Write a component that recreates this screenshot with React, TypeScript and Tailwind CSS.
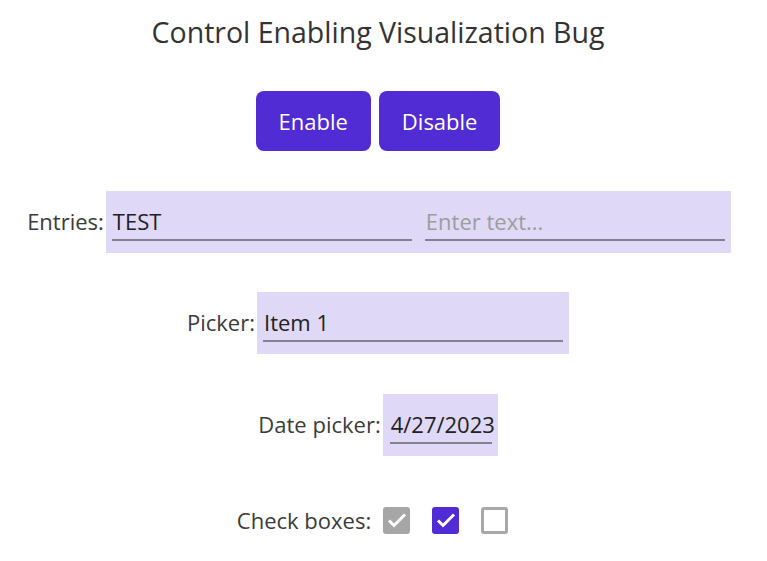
import type { ReactNode } from "react";

const font = { fontFamily: '"Open Sans", "Liberation Sans", sans-serif' };

function Field({ children, width, muted }: { children: ReactNode; width: string; muted?: boolean }) {
  return (
    <div className={`flex flex-col ${width}`}>
      <div
        className={`h-[30px] pl-px text-[22px] leading-[30px] whitespace-nowrap ${
          muted ? "text-[#9c9c9c]" : "text-[#212121]"
        }`}
      >
        {children}
      </div>
      <div className="mt-[3px] h-[2px] bg-[#86818f]" />
    </div>
  );
}

function Row({ label, children, boxClass }: { label: string; children: ReactNode; boxClass: string }) {
  return (
    <div className="flex items-start">
      <span className="mt-[15px] mr-[2px] text-[22px] leading-[30px] text-[#3b3b3b]">{label}</span>
      <div className={`flex h-[62px] items-start bg-[#dfd8f7] pt-[15px] ${boxClass}`}>{children}</div>
    </div>
  );
}

function Check({ state }: { state: "disabled" | "checked" | "empty" }) {
  if (state === "empty") {
    return <div className="h-[27px] w-[27px] rounded-[3px] border-[3px] border-[#a8a8a8] bg-white" />;
  }
  return (
    <div
      className={`grid h-[27px] w-[27px] place-items-center rounded-[3px] ${
        state === "checked" ? "bg-[#512bd4]" : "bg-[#a6a6a6]"
      }`}
    >
      <svg viewBox="0 0 24 24" className="h-[24px] w-[24px]" fill="none" stroke="white" strokeWidth="3">
        <path d="M4 12.5l5 5L20 6.5" />
      </svg>
    </div>
  );
}

export default function App() {
  return (
    <div className="min-h-screen bg-white" style={font}>
      <div className="flex w-[756px] flex-col items-center pt-[13px]">
        <h1 className="text-[28.5px] leading-[38px] font-normal text-[#333333]">
          Control Enabling Visualization Bug
        </h1>

        <div className="mt-[40px] flex gap-[8px]">
          <button className="h-[60px] rounded-[8px] bg-[#512bd4] px-[23px] text-[22px] text-white">Enable</button>
          <button className="h-[60px] rounded-[8px] bg-[#512bd4] px-[23px] text-[22px] text-white">Disable</button>
        </div>

        <div className="mt-[40px] pl-[2px]">
          <Row label="Entries:" boxClass="w-[625px] pl-[6px] gap-[13px]">
            <Field width="w-[300px]">TEST</Field>
            <Field width="w-[300px]" muted>
              Enter text...
            </Field>
          </Row>
        </div>

        <div className="mt-[39px]">
          <Row label="Picker:" boxClass="w-[312px] pl-[6px]">
            <Field width="w-[300px]">Item 1</Field>
          </Row>
        </div>

        <div className="mt-[40px]">
          <Row label="Date picker:" boxClass="w-[115px] pl-[7px]">
            <Field width="w-[102px]">4/27/2023</Field>
          </Row>
        </div>

        <div className="mt-[40px] flex h-[48px] items-center pr-[11px]">
          <span className="mr-[12px] text-[22px] leading-[30px] text-[#3b3b3b]">Check boxes:</span>
          <div className="flex items-center gap-[22px]">
            <Check state="disabled" />
            <Check state="checked" />
            <Check state="empty" />
          </div>
        </div>
      </div>
    </div>
  );
}
